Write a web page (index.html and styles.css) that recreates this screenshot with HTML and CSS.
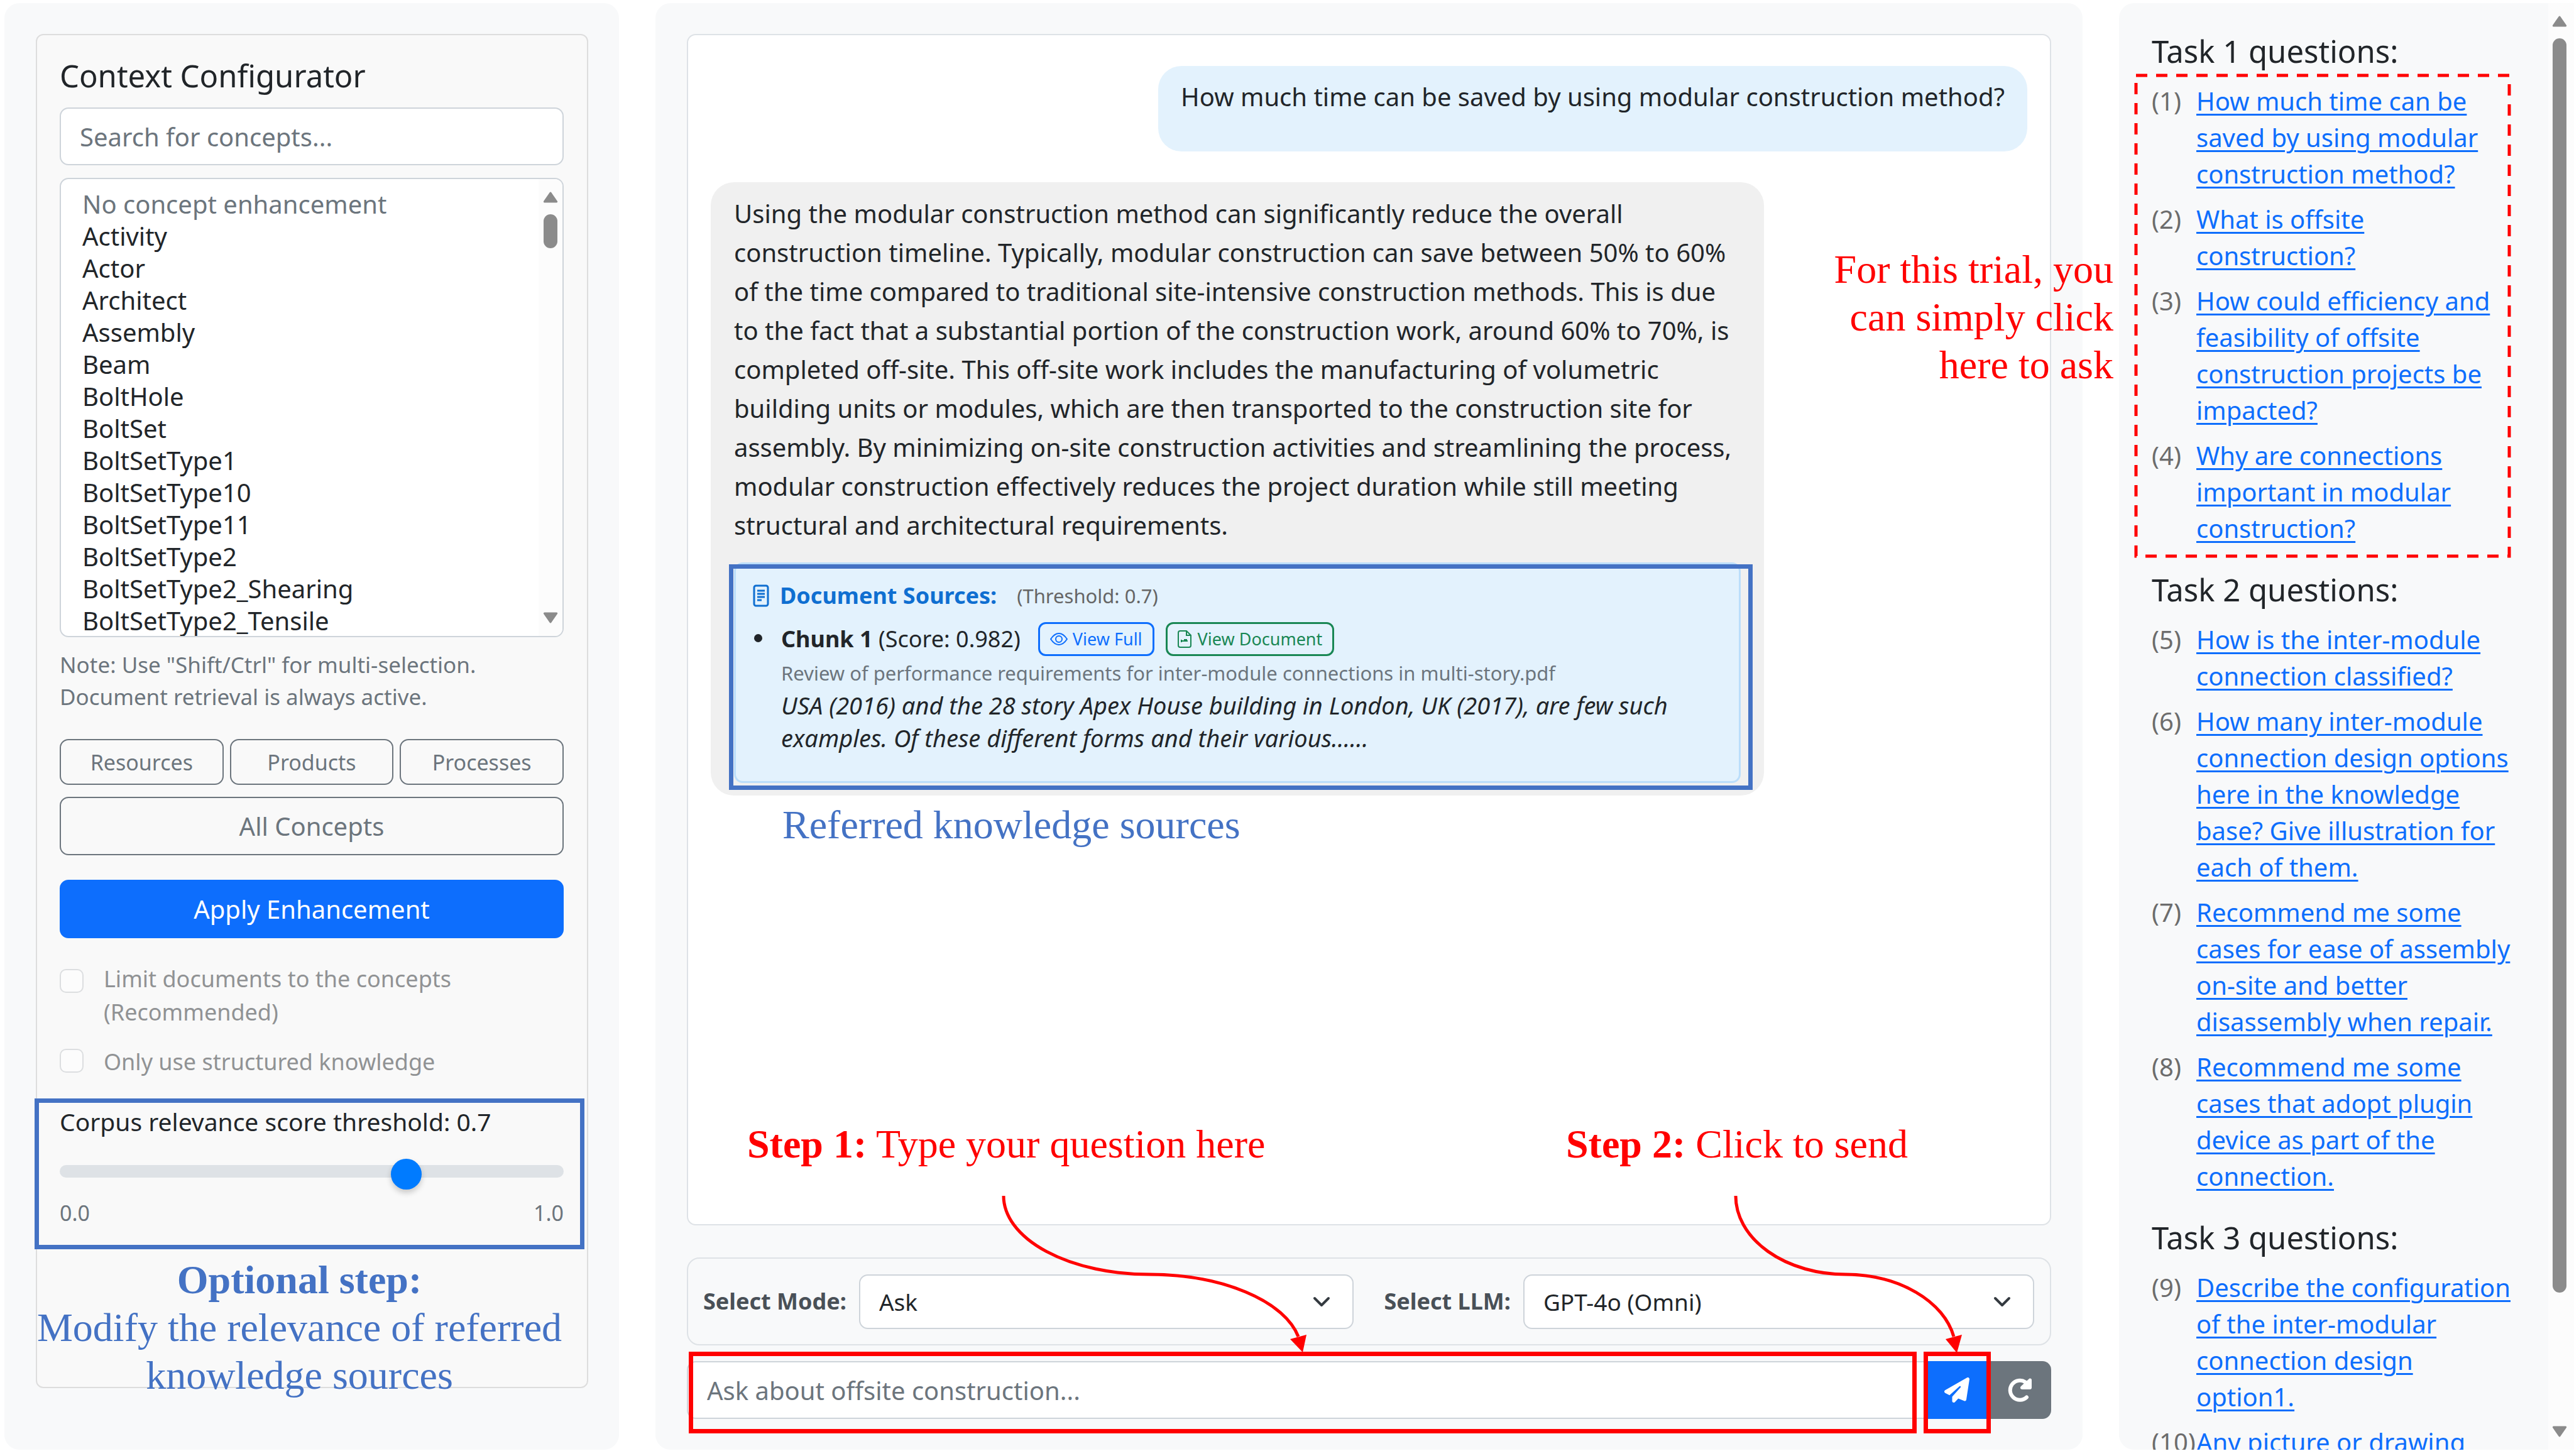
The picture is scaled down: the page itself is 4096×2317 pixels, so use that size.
FILE: index.html
```html
<!DOCTYPE html>
<html lang="en">
<head>
<meta charset="utf-8">
<title>Offsite construction assistant</title>
<link rel="stylesheet" href="styles.css">
</head>
<body>
<div class="layout">
  <aside class="panel panel-left">
    <section class="card">
      <h2 class="heading">Context Configurator</h2>
      <input class="field search" type="text" placeholder="Search for concepts..." aria-label="Search for concepts">
      <div class="listbox">
        <select class="concepts" multiple aria-label="Concepts">
          <option class="muted">No concept enhancement</option>
          <option>Activity</option>
          <option>Actor</option>
          <option>Architect</option>
          <option>Assembly</option>
          <option>Beam</option>
          <option>BoltHole</option>
          <option>BoltSet</option>
          <option>BoltSetType1</option>
          <option>BoltSetType10</option>
          <option>BoltSetType11</option>
          <option>BoltSetType2</option>
          <option>BoltSetType2_Shearing</option>
          <option>BoltSetType2_Tensile</option>
        </select>
        <div class="scroll scroll-list" aria-hidden="true">
          <svg class="scroll-arrow" viewBox="0 0 22 17"><path d="M11 2 20 15H2Z"/></svg>
          <span class="scroll-thumb"></span>
          <svg class="scroll-arrow" viewBox="0 0 22 17"><path d="M11 15 20 2H2Z"/></svg>
        </div>
      </div>
      <p class="note">Note: Use "Shift/Ctrl" for multi-selection. Document retrieval is always active.</p>
      <div class="filters">
        <button class="btn btn-outline btn-small" type="button">Resources</button>
        <button class="btn btn-outline btn-small" type="button">Products</button>
        <button class="btn btn-outline btn-small" type="button">Processes</button>
      </div>
      <button class="btn btn-outline" type="button">All Concepts</button>
      <button class="btn btn-primary" type="button">Apply Enhancement</button>
      <div class="check">
        <input type="checkbox" id="limit" disabled>
        <label for="limit">Limit documents to the concepts (Recommended)</label>
      </div>
      <div class="check check-last">
        <input type="checkbox" id="structured" disabled>
        <label for="structured">Only use structured knowledge</label>
      </div>
      <div class="threshold">
        <label class="threshold-label" for="threshold">Corpus relevance score threshold: 0.7</label>
        <input class="range" type="range" id="threshold" min="0" max="1" step="0.1" value="0.7">
        <div class="range-ends"><span>0.0</span><span>1.0</span></div>
        <span class="frame frame-threshold"></span>
        <p class="callout callout-blue callout-optional"><strong>Optional step:</strong><br>Modify the relevance of referred knowledge sources</p>
      </div>
    </section>
  </aside>

  <main class="panel panel-center">
    <div class="chat">
      <div class="bubble bubble-user">How much time can be saved by using modular construction method?</div>
      <div class="bubble bubble-bot">
        <p class="answer">Using the modular construction method can significantly reduce the overall<br>
        construction timeline. Typically, modular construction can save between 50% to 60%<br>
        of the time compared to traditional site-intensive construction methods. This is due<br>
        to the fact that a substantial portion of the construction work, around 60% to 70%, is<br>
        completed off-site. This off-site work includes the manufacturing of volumetric<br>
        building units or modules, which are then transported to the construction site for<br>
        assembly. By minimizing on-site construction activities and streamlining the process,<br>
        modular construction effectively reduces the project duration while still meeting<br>
        structural and architectural requirements.</p>
        <section class="sources">
          <h3 class="sources-title">
            <svg class="icon-source" viewBox="0 0 26 36"><rect x="2" y="2" width="22" height="32" rx="3"/><path d="M7 10h12M7 15h12M7 20h12M7 25h7"/></svg>
            Document Sources: <small>(Threshold: 0.7)</small>
          </h3>
          <ul class="chunks">
            <li>
              <div class="chunk-head">
                <span><strong>Chunk 1</strong> (Score: 0.982)</span>
                <button class="btn-tiny btn-blue" type="button"><svg class="icon-eye" viewBox="0 0 28 20"><path d="M1 10C5 4 9 1 14 1s9 3 13 9c-4 6-8 9-13 9S5 16 1 10Z"/><circle cx="14" cy="10" r="5"/></svg>View Full</button>
                <button class="btn-tiny btn-green" type="button"><svg class="icon-doc" viewBox="0 0 22 28"><path d="M4 1h10l7 7v16a3 3 0 0 1-3 3H4a3 3 0 0 1-3-3V4a3 3 0 0 1 3-3Z"/><path d="M14 1v7h7M6 17h10M6 15v4M10 15h5"/></svg>View Document</button>
              </div>
              <p class="chunk-file">Review of performance requirements for inter-module connections in multi-story.pdf</p>
              <p class="chunk-text">USA (2016) and the 28 story Apex House building in London, UK (2017), are few such<br>examples. Of these different forms and their various......</p>
            </li>
          </ul>
          <span class="frame frame-sources"></span>
          <p class="callout callout-blue callout-sources">Referred knowledge sources</p>
        </section>
      </div>
    </div>

    <div class="modes">
      <div class="mode">
        <label for="mode">Select Mode:</label>
        <div class="select"><select class="field" id="mode"><option>Ask</option></select><svg class="chevron" viewBox="0 0 28 18"><path d="m3 3 11 11L25 3"/></svg></div>
      </div>
      <div class="mode">
        <label for="llm">Select LLM:</label>
        <div class="select"><select class="field" id="llm"><option>GPT-4o (Omni)</option></select><svg class="chevron" viewBox="0 0 28 18"><path d="m3 3 11 11L25 3"/></svg></div>
      </div>
    </div>

    <form class="composer">
      <div class="composer-text">
        <input class="field" type="text" placeholder="Ask about offsite construction..." aria-label="Question">
        <span class="frame frame-input"></span>
      </div>
      <div class="composer-send">
        <button class="btn-icon btn-send" type="button" aria-label="Send"><svg class="icon-send" viewBox="0 0 512 512"><path d="M498.1 5.6c10.1 7 15.4 19.1 13.5 31.2l-64 416c-1.5 9.7-7.4 18.2-16 23s-18.9 5.4-28 1.6L284 427.7l-68.5 74.1c-8.9 9.7-22.9 12.9-35.2 8.1S160 493.2 160 480V396.4c0-4 1.5-7.8 4.2-10.7L331.8 202.8c5.8-6.3 5.6-16-.4-22s-15.7-6.4-22-.7L106 360.8 17.7 316.6C7.1 311.3 .3 300.7 0 288.9s5.9-22.8 16.1-28.7l448-256c10.7-6.1 23.9-5.5 34 1.4z"/></svg></button>
        <span class="frame frame-send"></span>
      </div>
      <button class="btn-icon btn-reset" type="button" aria-label="Reset"><svg class="icon-reset" viewBox="0 0 40 38"><path class="icon-arc" d="M31 30.500A15.500 15.500 0 1 1 29 6.500L33 11"/><path d="M35 1c2-1 4 0 4 2v12c0 2-1 3-3 3H24c-3 0-4-3-2-5Z"/></svg></button>
    </form>

    <p class="callout callout-red callout-trial">For this trial, you<br>can simply click<br>here to ask</p>
    <p class="callout callout-red callout-step1"><strong>Step 1:</strong> Type your question here</p>
    <p class="callout callout-red callout-step2"><strong>Step 2:</strong> Click to send</p>
    <svg class="arrows" viewBox="0 0 2271 420" aria-hidden="true">
      <path class="arrow-line" d="M554 16A232 125 0 0 0 786 141A242 123 0 0 1 1023 240"/>
      <path class="arrow-head" d="M1010 244 1036 237 1030 265Z"/>
      <path class="arrow-line" d="M1719 16A175 125 0 0 0 1894 141A176 123 0 0 1 2066 240"/>
      <path class="arrow-head" d="M2053 244 2079 237 2071 266Z"/>
    </svg>
  </main>

  <aside class="panel panel-right">
    <nav class="questions">
      <h2 class="heading">Task 1 questions:</h2>
      <div class="task-group">
        <ol class="tasks">
          <li><span>(1)</span><a href="#q1">How much time can be saved by using modular construction method?</a></li>
          <li><span>(2)</span><a href="#q2">What is offsite construction?</a></li>
          <li><span>(3)</span><a href="#q3">How could efficiency and feasibility of offsite construction projects be impacted?</a></li>
          <li><span>(4)</span><a href="#q4">Why are connections important in modular construction?</a></li>
        </ol>
        <svg class="dashes" aria-hidden="true"><rect width="100%" height="100%"/></svg>
      </div>
      <h2 class="heading">Task 2 questions:</h2>
      <div class="task-group">
        <ol class="tasks">
          <li><span>(5)</span><a href="#q5">How is the inter-module connection classified?</a></li>
          <li><span>(6)</span><a href="#q6">How many inter-module connection design options here in the knowledge base? Give illustration for each of them.</a></li>
          <li><span>(7)</span><a href="#q7">Recommend me some cases for ease of assembly on-site and better disassembly when repair.</a></li>
          <li><span>(8)</span><a href="#q8">Recommend me some cases that adopt plugin device as part of the connection.</a></li>
        </ol>
      </div>
      <h2 class="heading">Task 3 questions:</h2>
      <div class="task-group">
        <ol class="tasks">
          <li><span>(9)</span><a href="#q9">Describe the configuration of the inter-modular connection design option1.</a></li>
          <li><span>(10)</span><a href="#q10">Any picture or drawing</a></li>
        </ol>
      </div>
    </nav>
    <div class="scroll scroll-page" aria-hidden="true">
      <svg class="scroll-arrow" viewBox="0 0 22 17"><path d="M11 2 20 15H2Z"/></svg>
      <span class="scroll-thumb"></span>
      <svg class="scroll-arrow" viewBox="0 0 22 17"><path d="M11 15 20 2H2Z"/></svg>
    </div>
  </aside>
</div>
</body>
</html>
```

FILE: styles.css
```css
* { box-sizing: border-box; }

body {
  margin: 0;
  background: #fff;
  color: #212529;
  font-family: "Noto Sans", "Open Sans", sans-serif;
  font-size: 40px;
  line-height: 58px;
}

p, h2, h3, ul, ol { margin: 0; padding: 0; }

button, input, select { font-family: inherit; font-size: inherit; color: inherit; }

.layout {
  display: grid;
  grid-template-columns: 978fr 2271fr 724fr;
  gap: 58px;
  height: 100vh;
  padding: 5px 0 10px 7px;
  overflow: hidden;
}

.panel {
  position: relative;
  display: flex;
  min-width: 0;
  min-height: 0;
  background: #f8f9fa;
  border-radius: 24px;
}

.heading { font-size: 49px; font-weight: 400; line-height: 58px; }

.field {
  width: 100%;
  height: 92px;
  padding: 0 30px;
  border: 2px solid #ced4da;
  border-radius: 14px;
  background: #fff;
}

.field::placeholder { color: #6c757d; opacity: 1; }

/* Configurator */

.panel-left { padding: 49px 49px 98px 50px; }

.card {
  display: flex;
  flex-direction: column;
  flex: 1;
  min-width: 0;
  padding: 35px 37px 0 36px;
  background: #f9f9f9;
  border: 2px solid #ddd;
  border-radius: 12px;
}

.search { margin-top: 22px; flex: none; }

.listbox {
  display: flex;
  height: 731px;
  margin-top: 20px;
  border: 2px solid #ced4da;
  border-radius: 14px;
  background: #fff;
  overflow: hidden;
}

.concepts {
  flex: 1;
  min-width: 0;
  height: 727px;
  padding: 12px 0 0 34px;
  border: 0;
  outline: 0;
  background: transparent;
  overflow: hidden;
}

.concepts option { padding: 0; height: 51px; min-height: 0; overflow: visible; }
.concepts .muted { color: #6c757d; }

.scroll { display: flex; flex-direction: column; align-items: center; background: #fcfcfc; }
.scroll-arrow { flex: none; width: 24px; height: 18px; fill: #8b8b8b; stroke: #8b8b8b; stroke-width: 3; stroke-linejoin: round; }
.scroll-thumb { width: 22px; border-radius: 11px; background: #8b8b8b; }
.scroll .scroll-arrow:last-child { margin-top: auto; }
.scroll-list { width: 38px; padding: 20px 0; }
.scroll-list .scroll-thumb { height: 54px; margin-top: 18px; }

.note { margin-top: 18px; color: #6c757d; font-size: 35px; line-height: 51px; }

.filters { display: grid; grid-template-columns: repeat(3, 1fr); gap: 10px; margin: 42px 0 19px; }

.btn { width: 100%; height: 93px; flex: none; padding: 0; border: 2px solid #6c757d; border-radius: 14px; background: transparent; }
.btn-small { height: 73px; font-size: 34px; }
.btn-outline { color: #6c757d; }
.btn-primary { margin-top: 39px; border-color: #0d6efd; background: #0d6efd; color: #fff; }

.check { display: flex; gap: 32px; margin-top: 38px; font-size: 36px; line-height: 53px; color: #909294; }
.check-last { margin-top: 26px; }
.check input {
  appearance: none;
  flex: none;
  width: 38px;
  height: 38px;
  margin: 11px 0 0;
  border: 2px solid #dcdee0;
  border-radius: 10px;
  background: #fcfcfc;
}
.check-last input { margin-top: 6px; }

.threshold { position: relative; display: flex; flex-direction: column; margin-top: 40px; }
.threshold-label { font-size: 39px; }

.range { appearance: none; width: 100%; height: 20px; margin: 40px 0 31px; border-radius: 10px; background: #dee2e6; }
.range::-webkit-slider-runnable-track { height: 20px; }
.range::-webkit-slider-thumb {
  appearance: none;
  width: 49px;
  height: 49px;
  margin-top: -10px;
  border-radius: 50%;
  background: #007bff;
  box-shadow: 0 5px 10px rgba(0, 0, 0, .2);
}

.range-ends { display: flex; justify-content: space-between; color: #6c757d; font-size: 34px; line-height: 51px; }

/* Guide annotations */

.frame { position: absolute; border: 7px solid #4472c4; pointer-events: none; }
.frame-threshold { inset: -8px -33px -32px -40px; }
.frame-sources { inset: 0 -22px -14px -11px; }
.frame-input { inset: -15px 14px -23px 3px; border-color: #f00; }
.frame-send { inset: -15px -4px -23px -3px; border-color: #f00; }

.callout { position: absolute; font-family: "Liberation Serif", serif; font-size: 64px; line-height: 76px; pointer-events: none; }
.callout-blue { color: #4472c4; }
.callout-red { color: #f00; }
.callout-optional { top: 243px; left: -40px; right: -1px; text-align: center; }
.callout-sources { top: 377px; left: 74px; }
.callout-step1 { left: 146px; bottom: 448px; }
.callout-step2 { left: 1449px; bottom: 448px; }
.callout-trial { right: -49px; top: 386px; width: 480px; text-align: right; }

.arrows { position: absolute; left: 0; bottom: 0; width: 2271px; height: 420px; pointer-events: none; }
.arrow-line { fill: none; stroke: #f00; stroke-width: 5; }
.arrow-head { fill: #f00; }

/* Conversation */

.panel-center { flex-direction: column; padding: 49px 50px; }

.chat {
  display: flex;
  flex-direction: column;
  gap: 49px;
  flex: 1;
  min-height: 0;
  padding: 49px 36px;
  background: #fff;
  border: 2px solid #dee2e6;
  border-radius: 14px;
}

.bubble { border-radius: 37px; line-height: 62px; }
.bubble-user { align-self: flex-end; padding: 18px 36px 56px; background: #e3f2fd; }
.bubble-bot { width: 80%; padding: 19px 37px 20px; background: #f0f0f0; }
.answer { white-space: nowrap; }

.sources {
  position: relative;
  margin-top: 28px;
  padding: 22px 27px 43px;
  background: #e3f2fd;
  border: 3px solid #bbdefb;
  border-radius: 14px;
}

.sources-title { display: flex; align-items: center; color: #0f6fd1; font-size: 36px; line-height: 56px; }
.sources-title small { margin-left: 32px; color: #666; font-size: 31px; font-weight: 400; }
.icon-source { width: 26px; height: 36px; margin-right: 17px; fill: none; stroke: #0f6fd1; stroke-width: 3; }

.chunks { margin-top: 14px; padding-left: 45px; font-size: 36px; white-space: nowrap; list-style: none; }
.chunks li { position: relative; }
.chunks li::before { content: ""; position: absolute; left: -43px; top: 19px; width: 13px; height: 13px; border-radius: 50%; background: #212529; }
.chunk-head { display: flex; align-items: center; height: 54px; }
.btn-tiny { display: flex; align-items: center; height: 54px; padding: 0 16px; border: 3px solid; border-radius: 12px; background: transparent; font-size: 27px; line-height: 40px; }
.btn-blue { margin: 0 18px 0 28px; color: #0d6efd; }
.btn-green { color: #198754; }
.btn-tiny svg { fill: none; stroke: currentColor; stroke-width: 2; }
.icon-eye { width: 28px; height: 20px; margin-right: 8px; }
.icon-doc { width: 22px; height: 28px; margin-right: 10px; }
.chunk-file { margin-top: 3px; color: #6c757d; font-size: 31px; line-height: 48px; }
.chunk-text { margin-top: 1px; font-size: 38px; font-style: italic; line-height: 52px; }

.modes {
  display: flex;
  gap: 49px;
  margin-top: 51px;
  padding: 0 25px 0 24px;
  height: 140px;
  border: 2px solid #dee2e6;
  border-radius: 20px;
}
.mode { display: flex; align-items: center; gap: 20px; flex: 1; min-width: 0; }
.mode label { color: #495057; font-size: 36px; font-weight: 700; white-space: nowrap; }
.select { position: relative; flex: 1; }
.select .field { display: block; height: 87px; appearance: none; font-size: 37px; }
.chevron { position: absolute; right: 37px; top: 35px; width: 28px; height: 18px; fill: none; stroke: #343a40; stroke-width: 4; stroke-linecap: round; stroke-linejoin: round; }

.composer { display: flex; margin-top: 25px; }
.composer-text { position: relative; flex: 1; }
.composer-text .field { display: block; border-radius: 14px 0 0 14px; }
.composer-send { position: relative; }
.btn-icon { display: flex; align-items: center; justify-content: center; width: 100px; height: 92px; padding: 0; border: 0; color: #fff; }
.btn-send { background: #0d6efd; }
.btn-reset { background: #6c757d; border-radius: 0 14px 14px 0; }
.icon-send { width: 42px; height: 40px; fill: #fff; }
.icon-reset { width: 40px; height: 38px; fill: #fff; }
.icon-arc { fill: none; stroke: #fff; stroke-width: 6; stroke-linecap: round; }

/* Questions */

.panel-right { border-radius: 24px 0 0 24px; }
.questions { flex: 1; min-width: 0; padding: 47px 55px 0 52px; overflow: hidden; border-radius: 24px; }
.task-group { position: relative; margin: 22px 0 39px; }
.tasks { display: flex; flex-direction: column; gap: 14px; list-style: none; }
.tasks li { display: grid; grid-template-columns: 71px 1fr; }
.tasks span { color: #6c6c6c; }
.tasks a { color: #0d6efd; text-decoration-thickness: 3px; text-underline-offset: 5px; }
.dashes { position: absolute; left: -25px; top: -12px; width: calc(100% + 18px); height: calc(100% + 27px); overflow: visible; pointer-events: none; }
.dashes rect { fill: none; stroke: #f00; stroke-width: 5; stroke-dasharray: 18 14; }
.scroll-page { width: 41px; padding: 20px 5px 20px 0; }
.scroll-page .scroll-thumb { height: 1996px; margin-top: 18px; }
```
